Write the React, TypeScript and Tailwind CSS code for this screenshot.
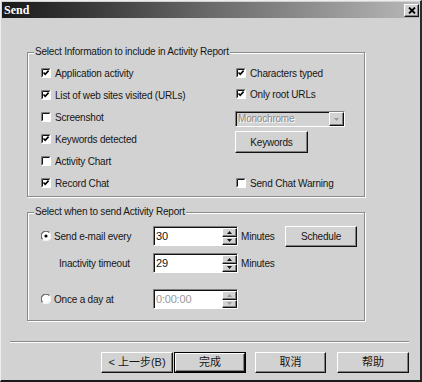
import React from 'react';

const ui = "font-['Liberation_Sans',Arial,sans-serif] text-[10px] tracking-[-0.2px] text-[#161616]";
const raised =
  'border border-t-white border-l-white border-r-[#111] border-b-[#111] shadow-[inset_-1px_-1px_0_#808080] bg-[#d2d2d2]';
const sunken =
  'border border-t-[#808080] border-l-[#808080] border-r-white border-b-white shadow-[inset_1px_1px_0_#111]';

const CheckBox = ({ on }: { on?: boolean }) => (
  <svg width="10" height="10" viewBox="0 0 10 10" className="shrink-0">
    <rect x="1" y="1" width="8" height="8" fill="#fff" />
    <path d="M0.5 9.5V0.5H9.5" stroke="#808080" fill="none" />
    <path d="M1.5 8.5V1.5H8.5" stroke="#111" fill="none" />
    <path d="M0.5 9.5H9.5V0.5" stroke="#fff" fill="none" />
    {on && <path d="M2.5 4.5L4.2 6.4L7.6 2.6" stroke="#000" strokeWidth="1.6" fill="none" />}
  </svg>
);

const Radio = ({ on }: { on?: boolean }) => (
  <svg width="10" height="10" viewBox="0 0 10 10" className="shrink-0">
    <circle cx="5" cy="5" r="4.3" fill="#fff" />
    <path d="M1.6 8.4A4.6 4.6 0 0 1 8.4 1.6" stroke="#666" strokeWidth="1.2" fill="none" />
    <path d="M8.4 1.6A4.6 4.6 0 0 1 1.6 8.4" stroke="#f4f4f4" strokeWidth="1.2" fill="none" />
    {on && <circle cx="5" cy="5" r="1.6" fill="#000" />}
  </svg>
);

const Arrow = ({ up, dim }: { up?: boolean; dim?: boolean }) => (
  <svg width="5" height="3" viewBox="0 0 5 3">
    <path d={up ? 'M2.5 0L5 3H0Z' : 'M0 0H5L2.5 3Z'} fill={dim ? '#999' : '#111'} />
  </svg>
);

const Check = ({ label, on, h = 'h-[22px]' }: { label: string; on?: boolean; h?: string }) => (
  <div className={`flex items-center gap-[4px] ${h}`}>
    <CheckBox on={on} />
    <span>{label}</span>
  </div>
);

const Spin = ({ value, dim }: { value: string; dim?: boolean }) => (
  <div className={`flex w-[85px] h-[20px] bg-white ${sunken}`}>
    <div className={`flex-1 pl-[2px] pt-[2px] leading-[14px] text-[11px] ${dim ? 'text-[#999]' : ''}`}>{value}</div>
    <div className="flex flex-col w-[15px] mt-[1px]">
      <div className={`flex-1 flex items-center justify-center ${raised}`}>
        <Arrow up dim={dim} />
      </div>
      <div className={`flex-1 flex items-center justify-center ${raised}`}>
        <Arrow dim={dim} />
      </div>
    </div>
  </div>
);

const Group = ({ title, className, children }: { title: string; className: string; children: React.ReactNode }) => (
  <div className={`relative ml-[26px] w-[338px] border border-[#8a8a8a] shadow-[inset_1px_1px_0_#fff,1px_1px_0_#fff] ${className}`}>
    <span className="absolute -top-[8px] left-[6px] px-[1px] bg-[#d2d2d2] leading-[14px]">{title}</span>
    {children}
  </div>
);

const Btn = ({ label, w = 'w-[72px]', def }: { label: string; w?: string; def?: boolean }) => (
  <div className={`${def ? 'border border-black' : ''} ${w} h-[21px] flex`}>
    <div className={`flex-1 flex items-center justify-center ${raised}`}>{label}</div>
  </div>
);

export default function App() {
  return (
    <div
      className={`${ui} w-[422px] h-[382px] bg-[#d2d2d2] flex flex-col border-l border-t border-l-[#eee] border-t-[#eee] border-r-2 border-b-2 border-r-[#2a2a2a] border-b-[#1a1a1a]`}
    >
      {/* title bar */}
      <div className="mx-[1px] mt-[1px] h-[16px] flex items-center justify-between bg-linear-to-r from-[#1a1a1a] via-[#6a6a6a] to-[#b8b8b8]">
        <span className="pl-[2px] font-['Liberation_Serif',serif] font-bold text-[12px] tracking-normal text-white">Send</span>
        <div className={`w-[15px] h-[13px] flex items-center justify-center ${raised}`}>
          <svg width="8" height="7" viewBox="0 0 8 7">
            <path d="M1 0.5L7 6.5M7 0.5L1 6.5" stroke="#000" strokeWidth="1.8" />
          </svg>
        </div>
      </div>

      {/* report items */}
      <Group title="Select Information to include in Activity Report" className="mt-[34px] h-[145px]">
        <div className="flex pt-[9px] pl-[13px]">
          <div className="w-[195px] flex flex-col">
            <Check label="Application activity" on />
            <Check label="List of web sites visited (URLs)" on />
            <Check label="Screenshot" />
            <Check label="Keywords detected" on />
            <Check label="Activity Chart" />
            <Check label="Record Chat" on />
          </div>
          <div className="flex flex-col">
            <Check label="Characters typed" on />
            <Check label="Only root URLs" on h="h-[20px]" />
            <div className={`-ml-[1px] mt-[7px] w-[110px] h-[16px] flex bg-[#d2d2d2] ${sunken}`}>
              <span className="flex-1 pl-[2px] leading-[13px] text-[#8a8a8a] [text-shadow:1px_1px_0_#fff]">Monochrome</span>
              <div className={`w-[15px] flex items-center justify-center ${raised}`}>
                <Arrow dim />
              </div>
            </div>
            <div className="-ml-[1px] mt-[4px] w-[73px] h-[22px] flex">
              <div className={`flex-1 flex items-center justify-center ${raised}`}>Keywords</div>
            </div>
            <div className="mt-[19px]">
              <Check label="Send Chat Warning" />
            </div>
          </div>
        </div>
      </Group>

      {/* schedule */}
      <Group title="Select when to send Activity Report" className="mt-[15px] h-[109px]">
        <div className="flex flex-col pt-[13px] pl-[13px]">
          <div className="flex items-center h-[20px]">
            <div className="w-[112px] flex items-center gap-[3px]">
              <Radio on />
              <span>Send e-mail every</span>
            </div>
            <Spin value="30" />
            <span className="ml-[3px] w-[44px]">Minutes</span>
            <div className="w-[72px] h-[21px] flex">
              <div className={`flex-1 flex items-center justify-center ${raised}`}>Schedule</div>
            </div>
          </div>
          <div className="flex items-center h-[20px] mt-[7px]">
            <div className="w-[112px] pl-[18px]">Inactivity timeout</div>
            <Spin value="29" />
            <span className="ml-[3px]">Minutes</span>
          </div>
          <div className="flex items-center h-[20px] mt-[16px]">
            <div className="w-[112px] flex items-center gap-[3px]">
              <Radio />
              <span>Once a day at</span>
            </div>
            <Spin value="0:00:00" dim />
          </div>
        </div>
      </Group>

      {/* separator */}
      <div className="ml-[9px] mt-[20px] w-[399px] h-[2px] border-t border-t-[#8a8a8a] border-b border-b-white" />

      {/* buttons */}
      <div className="flex ml-[100px] mt-[9px] text-[11px] tracking-normal font-['Liberation_Sans','Noto_Sans_CJK_SC',sans-serif]">
        <Btn label="< 上一步(B)" />
        <div className="ml-[1px]">
          <Btn label="完成" def />
        </div>
        <div className="ml-[9px]">
          <Btn label="取消" w="w-[71px]" />
        </div>
        <div className="ml-[11px]">
          <Btn label="帮助" />
        </div>
      </div>
    </div>
  );
}
